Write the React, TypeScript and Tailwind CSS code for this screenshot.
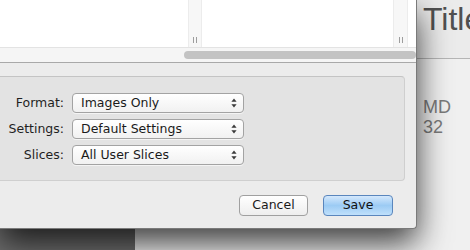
import React from 'react';

const UI_FONT = { fontFamily: '"DejaVu Sans", "Liberation Sans", sans-serif' };
const DOC_FONT = { fontFamily: '"Liberation Sans", Arial, sans-serif' };

const OPTIONS: { label: string; value: string }[] = [
  { label: 'Format:', value: 'Images Only' },
  { label: 'Settings:', value: 'Default Settings' },
  { label: 'Slices:', value: 'All User Slices' },
];

function ResizeGrip() {
  return (
    <div className="flex gap-[2px] h-[6px] mb-[4px]">
      <div className="w-px h-full bg-[#9d9d9d]" />
      <div className="w-px h-full bg-[#9d9d9d]" />
    </div>
  );
}

function PopUp({ value }: { value: string }) {
  return (
    <div className="w-[172px] h-[20px] flex items-center justify-between pl-[8px] pr-[6px] rounded-[4px] border border-[#a3a3a3] bg-gradient-to-b from-white to-[#f1f1f1] shadow-[0_1px_0_rgba(255,255,255,0.6)]">
      <span className="text-[12.5px] text-[#1a1a1a] leading-none">{value}</span>
      {/* up / down stepper arrows */}
      <svg width="6" height="10" viewBox="0 0 6 10">
        <path d="M3 0.5 L5.6 3.8 L0.4 3.8 Z" fill="#3a3a3a" />
        <path d="M3 9.5 L5.6 6.2 L0.4 6.2 Z" fill="#3a3a3a" />
      </svg>
    </div>
  );
}

export default function App() {
  return (
    <div className="relative w-[470px] h-[250px] overflow-hidden bg-[#ececec]" style={UI_FONT}>
      {/* window behind the sheet */}
      <div className="flex w-full h-full">
        <div className="w-[135px] shrink-0 h-full bg-[#6e6e6e]" />
        <div className="flex-1 min-w-0 overflow-hidden flex flex-col bg-[#f0f0f0]">
          <div className="h-[59px] shrink-0 border-b border-[#b5b5b5] bg-[#ebebeb] pl-[288px] pt-[1px]">
            <div className="text-[32px] leading-[36px] text-[#505050] whitespace-nowrap" style={DOC_FONT}>
              Title
            </div>
          </div>
          <div className="pl-[288px] pt-[38px] text-[18px] leading-[20px] text-[#7a7a7a] whitespace-nowrap" style={DOC_FONT}>
            <div>MD</div>
            <div>32</div>
          </div>
        </div>
      </div>

      {/* save sheet */}
      <div className="absolute left-0 top-0 w-[417px] h-[229px] flex flex-col bg-[#ececec] rounded-br-[4px] border-r border-b border-[#7a7a7a] shadow-[0_14px_32px_rgba(0,0,0,0.75)]">
        <div className="h-[47px] flex bg-white">
          <div className="w-[188px]" />
          <div className="w-[14px] flex items-end justify-center bg-[#f7f7f7] border-x border-[#ececec]">
            <ResizeGrip />
          </div>
          <div className="w-[191px]" />
          <div className="w-[15px] flex items-end justify-center bg-[#f7f7f7] border-x border-[#ececec]">
            <ResizeGrip />
          </div>
          <div className="flex-1" />
        </div>
        <div className="h-[16px] bg-[#f5f5f5] border-t border-[#e3e3e3] border-b border-b-[#a9a9a9] pl-[184px] pt-[3px]">
          <div className="h-[8px] rounded-full bg-[#c3c3c3]" />
        </div>

        <div className="flex-1 flex flex-col pt-[13px]">
          <div className="-ml-[6px] w-[411px] h-[105px] rounded-[4px] border border-[#cfcfcf] border-t-[#c4c4c4] bg-[#e3e3e3] pt-[16px] flex flex-col gap-[6px]">
            {OPTIONS.map((o) => (
              <div key={o.label} className="flex items-center gap-[8px]">
                <div className="w-[69px] text-right text-[12.5px] text-[#1f1f1f] leading-none">{o.label}</div>
                <PopUp value={o.value} />
              </div>
            ))}
          </div>

          <div className="flex justify-end gap-[15px] pr-[23px] pt-[14px]">
            <button className="w-[69px] h-[21px] rounded-[4px] border border-[#a0a0a0] bg-gradient-to-b from-white to-[#eeeeee] text-[12.5px] text-[#1a1a1a] leading-none">
              Cancel
            </button>
            <button className="w-[70px] h-[21px] rounded-[4px] border border-[#5a86bd] bg-gradient-to-b from-[#d4e8fc] via-[#9ccbf4] to-[#bfe0fb] text-[12.5px] text-[#111] leading-none">
              Save
            </button>
          </div>
        </div>
      </div>
    </div>
  );
}
